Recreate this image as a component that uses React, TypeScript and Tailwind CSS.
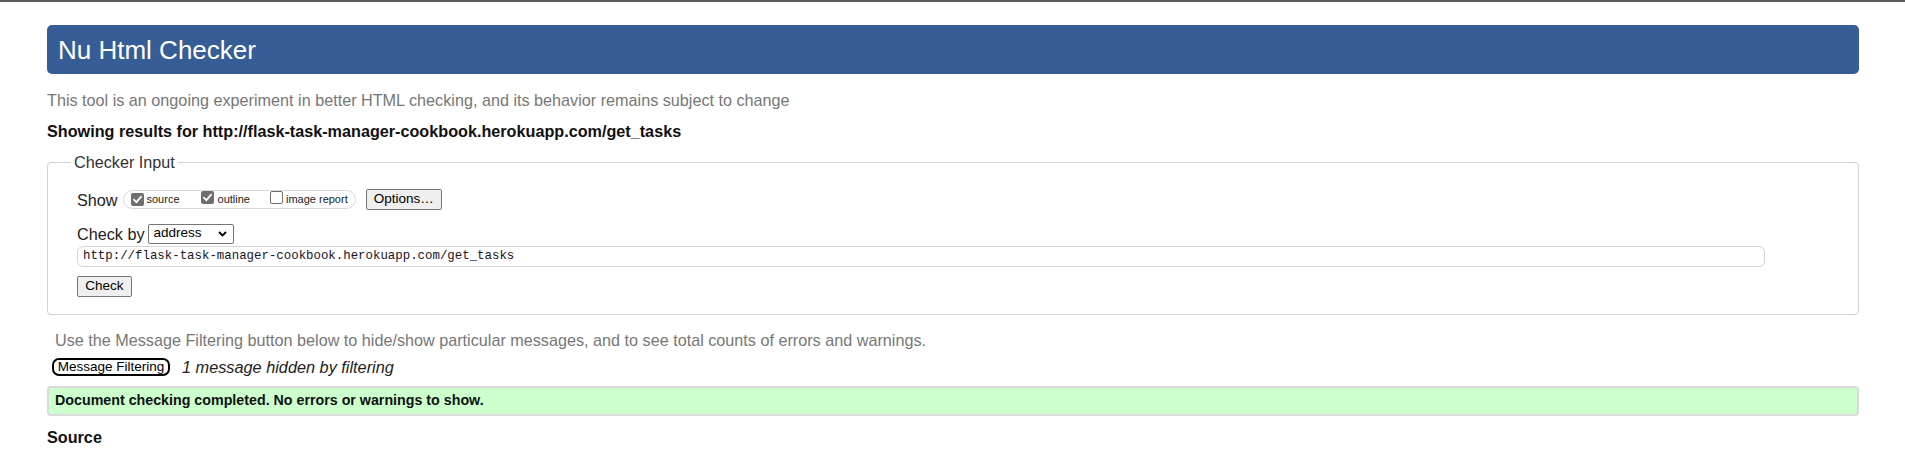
import React from "react";

const Checked = () => (
  <span className="inline-flex h-[13px] w-[13px] items-center justify-center rounded-[2px] bg-[#6e6e6e]">
    <svg width="11" height="11" viewBox="0 0 11 11">
      <path d="M2 5.8 L4.4 8.1 L9 2.8" fill="none" stroke="#fff" strokeWidth="1.8" strokeLinecap="square" />
    </svg>
  </span>
);

const Unchecked = () => (
  <span className="inline-block h-[13px] w-[13px] rounded-[2px] border border-[#6e6e6e] bg-white" />
);

export default function App() {
  const font = { fontFamily: '"Liberation Sans", Arial, sans-serif' };
  return (
    <div className="min-h-[465px] bg-white text-[#222]" style={font}>
      <div className="h-[2px] bg-[#5a5a5a]" />
      <div className="pl-[47px] pr-[46px]">
        <div className="mt-[23px] flex h-[49px] items-center rounded-[5px] bg-[#365d95] pl-[11px] text-[26px] leading-none text-white">
          Nu Html Checker
        </div>
        <div className="mt-[17px] text-[16.2px] leading-[18px] text-[#777]">
          This tool is an ongoing experiment in better HTML checking, and its behavior remains subject to change
        </div>
        <div className="mt-[13px] text-[16.2px] font-bold leading-[18px] text-[#111]">
          Showing results for http://flask-task-manager-cookbook.herokuapp.com/get_tasks
        </div>
        <fieldset className="mt-[13px] rounded-[4px] border border-[#d0d0d0] pb-[17px] pl-[29px] pr-[29px]">
          <legend className="ml-[-6px] px-[3px] text-[16.2px] leading-[18px] text-[#333]">Checker Input</legend>
          <div className="mt-[18px] flex h-[21px] items-center">
            <span className="text-[16.2px] leading-[18px]">Show</span>
            <div className="ml-[5px] flex h-[19px] items-center rounded-full border border-[#d8d8d8] pl-[7px] pr-[7px] text-[11px] text-[#222]">
              <Checked />
              <span className="ml-[3px]">source</span>
              <span className="ml-[21px]"><Checked /></span>
              <span className="ml-[4px]">outline</span>
              <span className="ml-[20px]"><Unchecked /></span>
              <span className="ml-[3px]">image report</span>
            </div>
            <button className="ml-[10px] flex h-[21px] w-[76px] items-center justify-center rounded-[2px] border border-[#767676] bg-[#efefef] text-[13.5px] text-black">
              Options…
            </button>
          </div>
          <div className="mt-[13px] flex h-[21px] items-center">
            <span className="text-[16.2px] leading-[18px]">Check by</span>
            <div className="ml-[4px] flex h-[20px] w-[86px] items-center justify-between rounded-[2px] border border-[#767676] bg-white pl-[4px] pr-[6px] text-[13.5px] text-black">
              <span>address</span>
              <svg width="9" height="6" viewBox="0 0 9 6">
                <path d="M1 1 L4.5 4.5 L8 1" fill="none" stroke="#000" strokeWidth="1.8" />
              </svg>
            </div>
          </div>
          <div
            className="mt-[2px] flex h-[21px] items-center rounded-[6px] border border-[#d4d4d4] pl-[5px] text-[12.4px] text-[#1a1326]"
            style={{ fontFamily: '"Liberation Mono", "DejaVu Sans Mono", monospace', marginRight: "64px" }}
          >
            http://flask-task-manager-cookbook.herokuapp.com/get_tasks
          </div>
          <button className="mt-[9px] flex h-[21px] w-[55px] items-center justify-center rounded-[2px] border border-[#767676] bg-[#efefef] text-[13.5px] text-black">
            Check
          </button>
        </fieldset>
        <div className="mt-[16px] pl-[8px] text-[16.2px] leading-[18px] text-[#777]">
          Use the Message Filtering button below to hide/show particular messages, and to see total counts of errors and warnings.
        </div>
        <div className="mt-[9px] flex h-[18px] items-center pl-[5px]">
          <button className="flex h-[18px] w-[118px] items-center justify-center rounded-[7px] border-2 border-black bg-white text-[13.5px] leading-none text-black">
            Message Filtering
          </button>
          <span className="ml-[12px] text-[16.3px] italic leading-[18px] text-[#222]">1 message hidden by filtering</span>
        </div>
        <div className="mt-[10px] flex h-[30px] items-center rounded-[4px] border-2 border-[#dadada] bg-[#ccffcc] pl-[6px] text-[14.25px] font-bold text-[#111]">
          Document checking completed. No errors or warnings to show.
        </div>
        <div className="mt-[12px] text-[16.2px] font-bold leading-[18px] text-[#111]">Source</div>
      </div>
    </div>
  );
}
